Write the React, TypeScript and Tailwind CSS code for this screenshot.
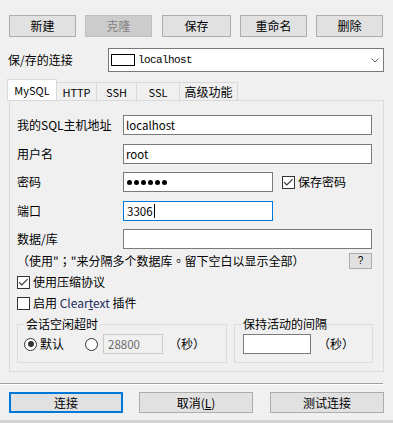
import React from "react";

function Btn({
  children,
  w,
  disabled,
}: {
  children: React.ReactNode;
  w: string;
  disabled?: boolean;
}) {
  return (
    <div
      className={
        w +
        " h-[22px] flex items-center justify-center border " +
        (disabled
          ? "bg-[#cccccc] border-[#bfbfbf] text-[#838383]"
          : "bg-[#e1e1e1] border-[#adadad] text-black")
      }
    >
      {children}
    </div>
  );
}

function Check({ checked }: { checked?: boolean }) {
  return (
    <span className="w-[13px] h-[13px] border border-[#333333] bg-white flex items-center justify-center shrink-0">
      {checked && (
        <svg width="11" height="11" viewBox="0 0 11 11">
          <path d="M1 5.2 L3.8 8 L9.6 2.2" stroke="#333333" strokeWidth="1.1" fill="none" />
        </svg>
      )}
    </span>
  );
}

function Radio({ checked }: { checked?: boolean }) {
  return (
    <span className="w-[13px] h-[13px] rounded-full border border-[#333333] bg-white flex items-center justify-center shrink-0">
      {checked && <span className="w-[6px] h-[6px] rounded-full bg-[#333333]" />}
    </span>
  );
}

function Row({
  label,
  children,
  mt,
}: {
  label: React.ReactNode;
  children: React.ReactNode;
  mt: string;
}) {
  return (
    <div className={"flex items-center h-[20px] " + mt}>
      <span className="w-[106px] shrink-0 whitespace-nowrap">{label}</span>
      {children}
    </div>
  );
}

export default function App() {
  return (
    <div className="w-[393px] h-[423px] bg-[#f0f0f0] font-['Noto_Sans_CJK_SC',sans-serif] text-[12px] leading-[16px] text-black flex flex-col overflow-hidden">
      {/* toolbar buttons */}
      <div className="flex mt-[15px] ml-[9px]">
        <Btn w="w-[67px]">新建</Btn>
        <div className="ml-[9px]">
          <Btn w="w-[67px]" disabled>
            克隆
          </Btn>
        </div>
        <div className="ml-[10px]">
          <Btn w="w-[69px]">保存</Btn>
        </div>
        <div className="ml-[9px]">
          <Btn w="w-[67px]">重命名</Btn>
        </div>
        <div className="ml-[9px]">
          <Btn w="w-[67px]">删除</Btn>
        </div>
      </div>

      {/* saved connections */}
      <div className="flex items-center mt-[11px] ml-[8px] h-[24px]">
        <span className="w-[100px] shrink-0">保/存的连接</span>
        <div className="w-[276px] h-[24px] border border-[#7a7a7a] bg-white flex items-center pl-[2px]">
          <span className="w-[24px] h-[12px] border border-black bg-white shrink-0" />
          <span className="ml-[3px] font-['Liberation_Mono',monospace] text-[11px] tracking-[-0.6px] leading-[12px]">localhost</span>
          <svg className="ml-auto mr-[4px]" width="8" height="5" viewBox="0 0 8 5">
            <path d="M0.5 0.5 L4 4 L7.5 0.5" stroke="#606060" strokeWidth="1" fill="none" />
          </svg>
        </div>
      </div>

      {/* tabs */}
      <div className="flex items-end mt-[7px] ml-[7px] h-[21px]">
        <div className="w-[50px] h-[21px] bg-white border-l border-t border-r border-[#d9d9d9] flex items-center justify-center text-[11px]">
          MySQL
        </div>
        <div className="w-[40px] h-[18px] border-t border-r border-[#d9d9d9] flex items-center justify-center text-[11px]">
          HTTP
        </div>
        <div className="w-[40px] h-[18px] border-t border-r border-[#d9d9d9] flex items-center justify-center text-[11px]">
          SSH
        </div>
        <div className="w-[43px] h-[18px] border-t border-r border-[#d9d9d9] flex items-center justify-center text-[11px]">
          SSL
        </div>
        <div className="w-[58px] h-[18px] border-t border-r border-[#d9d9d9] flex items-center justify-center">
          高级功能
        </div>
      </div>

      {/* panel */}
      <div className="ml-[9px] w-[375px] h-[272px] border border-[#d9d9d9] flex flex-col pl-[7px]">
        <Row label="我的SQL主机地址" mt="mt-[14px]">
          <div className="w-[249px] h-[20px] border border-[#7a7a7a] bg-white flex items-center pl-[2px] text-[11.5px]">
            localhost
          </div>
        </Row>
        <Row label="用户名" mt="mt-[9px]">
          <div className="w-[249px] h-[20px] border border-[#7a7a7a] bg-white flex items-center pl-[2px] text-[11.5px]">
            root
          </div>
        </Row>
        <Row label="密码" mt="mt-[8px]">
          <div className="w-[150px] h-[20px] border border-[#7a7a7a] bg-white flex items-center pl-[3px] gap-[2px]">
            <span className="w-[5px] h-[5px] rounded-full bg-black" />
            <span className="w-[5px] h-[5px] rounded-full bg-black" />
            <span className="w-[5px] h-[5px] rounded-full bg-black" />
            <span className="w-[5px] h-[5px] rounded-full bg-black" />
            <span className="w-[5px] h-[5px] rounded-full bg-black" />
            <span className="w-[5px] h-[5px] rounded-full bg-black" />
          </div>
          <div className="flex items-center ml-[9px]">
            <Check checked />
            <span className="ml-[3px]">保存密码</span>
          </div>
        </Row>
        <Row label="端口" mt="mt-[9px]">
          <div className="w-[150px] h-[20px] border border-[#0078d7] bg-white flex items-center pl-[3px] text-[11.5px]">
            3306
            <span className="w-px h-[14px] bg-black ml-[1px]" />
          </div>
        </Row>
        <Row label="数据/库" mt="mt-[8px]">
          <div className="w-[249px] h-[20px] border border-[#7a7a7a] bg-white" />
        </Row>

        <div className="flex items-center h-[17px] mt-[3px]">
          <span className="whitespace-nowrap">
            （使用"<span className="font-['Noto_Sans_CJK_TC',sans-serif]">；</span>"来分隔多个数据库
            <span className="font-['Noto_Sans_CJK_TC',sans-serif]">。</span>留下空白以显示全部）
          </span>
          <div className="ml-auto mr-[11px] w-[23px] h-[16px] border border-[#adadad] bg-[#e1e1e1] flex items-center justify-center text-[10px] leading-[10px] font-['Liberation_Sans',sans-serif]">
            ?
          </div>
        </div>

        <div className="flex items-center h-[16px] mt-[5px]">
          <Check checked />
          <span className="ml-[3px]">使用压缩协议</span>
        </div>
        <div className="flex items-center h-[16px] mt-[5px]">
          <Check />
          <span className="ml-[3px]">
            启用 <span className="text-[#1e2a5e]">Clear<span className="underline">t</span>ext</span> 插件
          </span>
        </div>

        {/* group boxes */}
        <div className="flex mt-[13px]">
          <div className="relative w-[210px] h-[39px] border border-[#dcdcdc] flex items-center pl-[6px] pt-[1px]">
            <span className="absolute left-[6px] top-[-9px] px-[2px] bg-[#f0f0f0] leading-[16px]">会话空闲超时</span>
            <Radio checked />
            <span className="ml-[3px]">默认</span>
            <span className="ml-[21px]">
              <Radio />
            </span>
            <div className="ml-[5px] w-[60px] h-[20px] border border-[#cccccc] bg-[#f0f0f0] flex items-center pl-[4px] text-[11.5px] text-[#6d6d6d]">
              28800
            </div>
            <span className="ml-[6px]">（秒）</span>
          </div>
          <div className="relative ml-[7px] w-[139px] h-[39px] border border-[#dcdcdc] flex items-center pl-[8px] pt-[1px]">
            <span className="absolute left-[7px] top-[-9px] px-[1px] bg-[#f0f0f0] leading-[16px]">保持活动的间隔</span>
            <div className="w-[68px] h-[20px] border border-[#7a7a7a] bg-white" />
            <span className="ml-[7px]">（秒）</span>
          </div>
        </div>
      </div>

      {/* separator */}
      <div className="mt-[11px] w-[383px] h-px bg-[#a0a0a0]" />
      <div className="w-[383px] h-px bg-white" />

      {/* bottom buttons */}
      <div className="flex mt-[7px] ml-[9px]">
        <div className="w-[114px] h-[21px] border-2 border-[#0078d7] bg-[#e1e1e1] flex items-center justify-center">
          连接
        </div>
        <div className="ml-[16px] w-[114px] h-[21px] border border-[#adadad] bg-[#e1e1e1] flex items-center justify-center">
          取消(<span className="underline">L</span>)
        </div>
        <div className="ml-[17px] w-[114px] h-[21px] border border-[#adadad] bg-[#e1e1e1] flex items-center justify-center">
          测试连接
        </div>
      </div>

      <div className="mt-auto h-[3px] bg-[#d4d4d4]" />
    </div>
  );
}
